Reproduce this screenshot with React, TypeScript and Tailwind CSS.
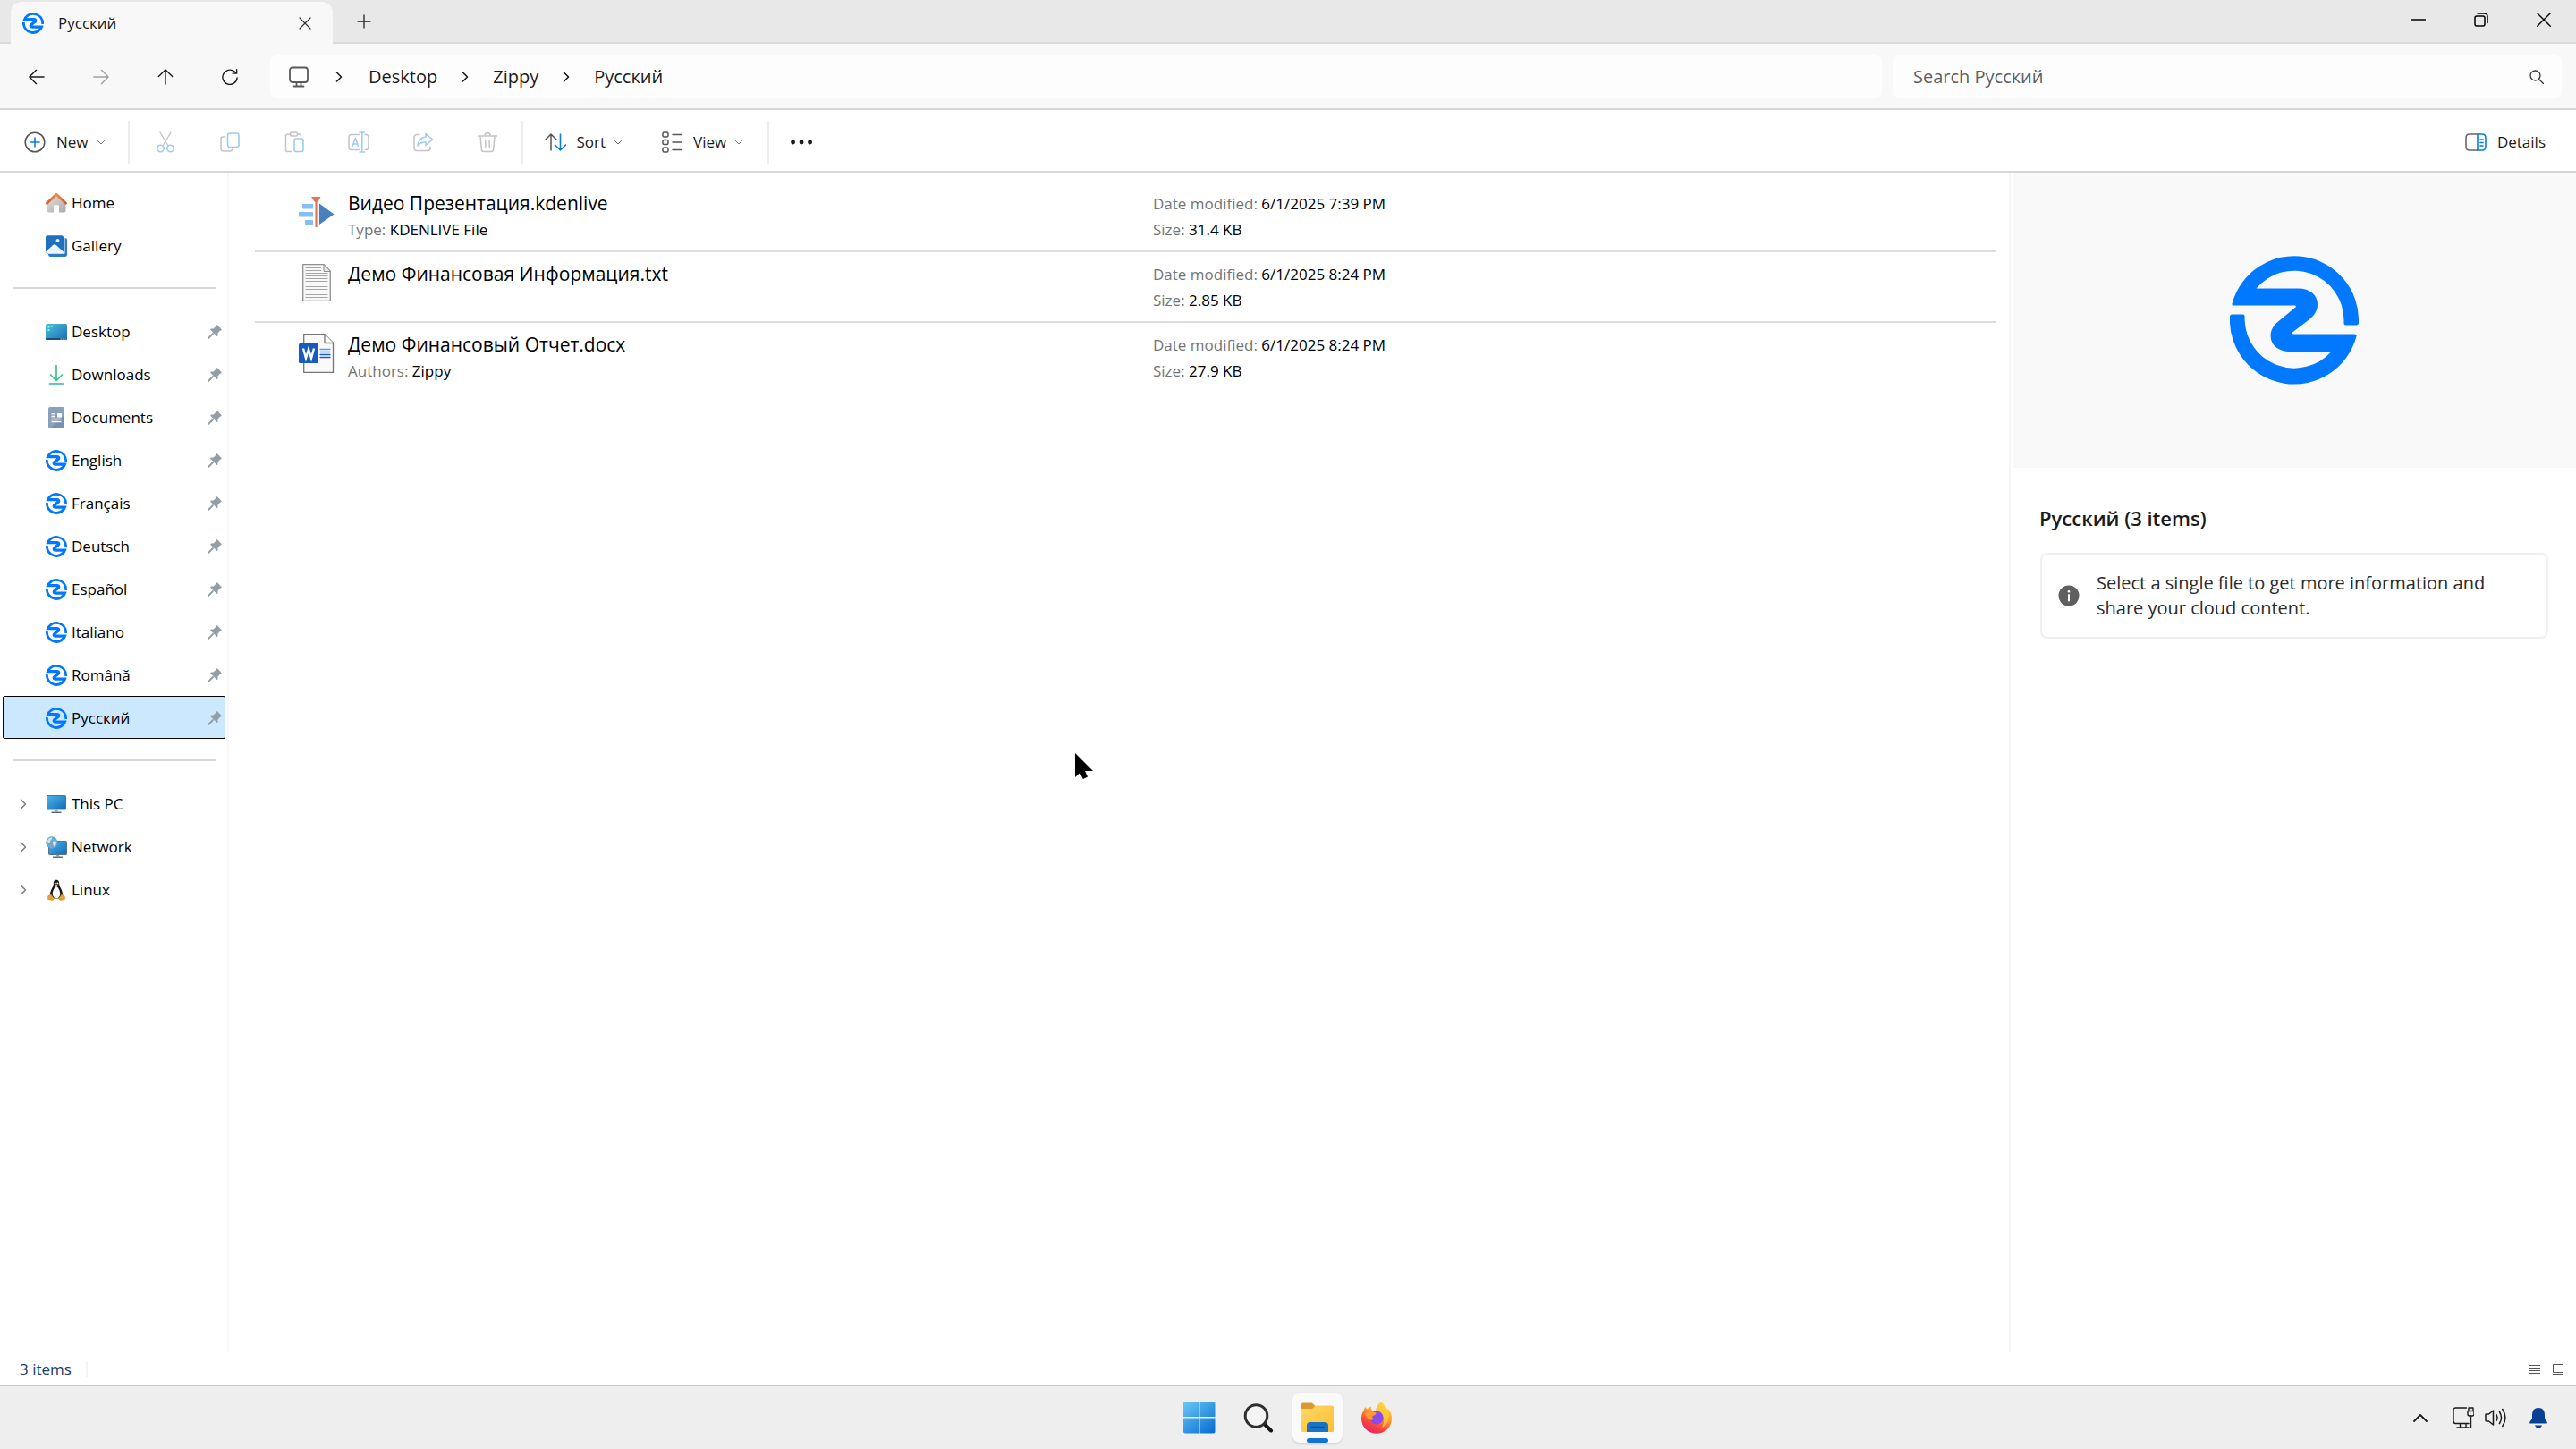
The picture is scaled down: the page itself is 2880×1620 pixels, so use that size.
import type { ReactNode } from "react";

const STROKE = { fill: "none", strokeLinecap: "round", strokeLinejoin: "round" } as const;

type BoxProps = { size: number; children: ReactNode; className?: string; view?: string; height?: number };

function Icon({ size, children, className = "", view = "0 0 24 24", height }: BoxProps) {
  return (
    <svg width={size} height={height ?? size} viewBox={view} className={`block shrink-0 ${className}`} aria-hidden="true" {...STROKE}>
      {children}
    </svg>
  );
}

function Logo({ size }: { size: number }) {
  return (
    <svg width={size} height={size} viewBox="0 0 144 144" className="block shrink-0" aria-hidden="true">
      <path
        fill="#0078ff"
        d="M2.5 53.5A72 72 0 0 1 144 74.500Q144 77.500 141.500 77.500H129.500Q127.500 77.500 127.500 75.500V72A55.500 55.500 0 0 0 29.500 36.500H76C90 36.500 98 44 98 54C98 61 95 66 89 71L70 85.500Q69 87.500 71 87.500H139.500Q142 87.500 141.500 90A72 72 0 0 1 0 68Q0 65.500 2.500 65.500H14.500Q16.600 65.500 16.600 67.500V72A55.500 55.500 0 0 0 113.500 107H69C54 107 45.600 100 45.600 89C45.600 83 48.500 78 54.300 73.200L73.500 57.500Q74.500 55.500 72.500 55.500H4Q2 55.500 2.500 53.500Z"
      />
    </svg>
  );
}

function ChevronRight({ className = "text-[#1b1b1b]" }: { className?: string }) {
  return (
    <Icon size={12} view="0 0 12 12" className={className}>
      <path d="M3.500 1L8.500 6L3.500 11" stroke="currentColor" strokeWidth="1.6" />
    </Icon>
  );
}

function ChevronDown() {
  return (
    <Icon size={8} view="0 0 8 8">
      <path d="M.5 2.500L4 6L7.500 2.500" stroke="#777" strokeWidth="1" />
    </Icon>
  );
}

function HomeIcon() {
  return (
    <Icon size={24}>
      <defs>
        <linearGradient id="wall" x1="0" y1="0" x2="1" y2="1">
          <stop offset="0" stopColor="#e2e2e2" />
          <stop offset="1" stopColor="#a9a9a9" />
        </linearGradient>
        <linearGradient id="roof" x1="0" y1="0" x2="1" y2="0">
          <stop offset="0" stopColor="#e2522f" />
          <stop offset=".5" stopColor="#f08a3c" />
          <stop offset="1" stopColor="#e2522f" />
        </linearGradient>
      </defs>
      <path d="M12 2.500L22.500 12.500V20.500Q22.500 22.500 20.500 22.500H15V15.500Q15 14 13.500 14H10.500Q9 14 9 15.500V22.500H3.500Q1.500 22.500 1.500 20.500V12.500Z" fill="url(#wall)" />
      <path d="M1.500 12.200L12 2.200L22.500 12.200" stroke="url(#roof)" strokeWidth="2.800" />
    </Icon>
  );
}

function GalleryIcon() {
  return (
    <Icon size={24}>
      <path d="M3 21H20.500Q21.500 21 21.500 20V3Q24 3 24 5V21.500Q24 24 21.500 24H5.500Q3 24 3 21Z" fill="#2c7bc4" />
      <rect width="20" height="20.500" y=".2" rx="2" fill="#1f6fbf" />
      <path d="M0 18.500L8.500 10.800Q10 9.500 11.500 10.800L20 18.500Q20 20.700 18 20.700H2Q0 20.700 0 18.500Z" fill="#eaf5fd" />
      <circle cx="13.500" cy="6" r="2" fill="#dff0fc" />
    </Icon>
  );
}

function DesktopIcon() {
  return (
    <Icon size={24}>
      <defs>
        <linearGradient id="desk" x1="0" y1="0" x2="1" y2="1">
          <stop offset="0" stopColor="#4cc3d9" />
          <stop offset="1" stopColor="#1f6bb5" />
        </linearGradient>
      </defs>
      <rect y="3" width="24" height="18" rx="1.500" fill="url(#desk)" />
      <path d="M0 19H24V19.500Q24 21 22.500 21H1.500Q0 21 0 19.500Z" fill="#17507f" />
      <path d="M2.500 5.500H4.500V7.500H2.500ZM2.500 9H4.500V11H2.500ZM6 5.500H7.500V7H6Z" fill="#8ff0ea" />
      <path d="M17 20H18M19.500 20H20.500M22 20H22.500" stroke="#bcd8ee" />
    </Icon>
  );
}

function DownloadsIcon() {
  return (
    <Icon size={24}>
      <path d="M12 1.500V18M5.500 12L12 18.500L18.500 12" stroke="#3fbf8f" strokeWidth="1.700" />
      <path d="M4.500 22H19.500" stroke="#35b3a0" strokeWidth="1.700" />
    </Icon>
  );
}

function DocumentsIcon() {
  return (
    <Icon size={24}>
      <rect x="3" width="18" height="24" rx="2" fill="#8aa0bb" />
      <path d="M21 9V22Q21 24 19 24H5Z" fill="#788faf" />
      <path d="M6.500 7.800H11M6.500 10.500H11M6.500 13.500H17.500M6.500 16.500H17.500" stroke="#fff" strokeWidth="1.400" strokeLinecap="butt" />
      <rect x="13" y="7" width="5" height="4.500" fill="#fff" />
    </Icon>
  );
}

function PcIcon() {
  return (
    <Icon size={24}>
      <defs>
        <linearGradient id="pc" x1="0" y1="0" x2="1" y2="1">
          <stop offset="0" stopColor="#4ab8ea" />
          <stop offset="1" stopColor="#1568b5" />
        </linearGradient>
      </defs>
      <rect x="1.500" y="2.500" width="21" height="15.500" rx=".8" fill="url(#pc)" stroke="#56708a" strokeWidth="1" />
      <path d="M10.500 18.500H13.500V20.500H10.500Z" fill="#9aa4ad" />
      <path d="M7 21.300H17" stroke="#5c6872" strokeWidth="1.500" />
    </Icon>
  );
}

function NetworkIcon() {
  return (
    <Icon size={24}>
      <rect x="3.500" y="5.500" width="20" height="15" rx=".8" fill="url(#pc)" stroke="#56708a" strokeWidth="1" />
      <path d="M12 21H15V22.500H12Z" fill="#9aa4ad" />
      <path d="M8.500 23.200H18.500" stroke="#5c6872" strokeWidth="1.400" />
      <circle cx="6.800" cy="6.800" r="6.600" fill="#6fa9cc" />
      <path d="M2 4.500Q4 1 7 1.500Q8 3 5.500 4.500Q5 7 3.500 7.500Q2 6.500 2 4.500ZM8 6Q11 4 12.500 7Q11.500 10.500 9.500 11.500Q7.500 9 8 6Z" fill="#cfe6f1" />
    </Icon>
  );
}

function LinuxIcon() {
  return (
    <Icon size={24}>
      <path d="M12 .8C9.300 .8 8.600 3 8.900 5.800C9 8 6.800 10 5.800 13C5 15.500 4.500 17.500 5.500 19.500Q12 24 18.500 19.500C19.500 17.500 19 15.500 18.200 13C17.200 10 15.200 8 15.200 5.800C15.300 2.500 14.500 .8 12 .8Z" fill="#161616" />
      <path d="M12 8C10.200 8.500 8.200 12 7.800 15.500C7.600 18.500 9.500 21.500 12 21.500S16.500 18.500 16.200 15.500C15.800 12 13.800 8.500 12 8Z" fill="#fff" />
      <circle cx="10.700" cy="4.600" r="1" fill="#fff" />
      <circle cx="13.400" cy="4.600" r="1" fill="#fff" />
      <path d="M9.900 6.700L12 5.500L14.200 6.700L12 8.400Z" fill="#eea42b" />
      <path d="M2.800 18.800L6 17L9.500 21.500Q9 23.800 6.500 23.300L2.500 22.300ZM21.200 18.800L18 17L14.500 21.500Q15 23.800 17.500 23.300L21.500 22.300Z" fill="#e5a034" stroke="#b8781c" strokeWidth=".5" />
    </Icon>
  );
}

function PinIcon() {
  return (
    <Icon size={16} view="0 0 16 16">
      <path d="M9.800 .5Q10.500 0 11.200 .6L15.500 4.900Q16 5.600 15.300 6.200L14 6.800L11.500 9.500V12Q11.300 13.500 10.200 12.700L3.400 5.900Q2.700 4.700 4.200 4.600L6.600 4.500L9.200 2Z" fill="#939ea5" />
      <path d="M6 10L1 15" stroke="#939ea5" strokeWidth="1.800" />
    </Icon>
  );
}

function KdenliveIcon() {
  return (
    <Icon size={40} view="0 0 40 40">
      <path d="M4 11H16V16.500H4ZM0 20H16V25.500H0ZM7 29H16V34.500H7Z" fill="#86bdf3" />
      <path d="M14 3H24.500L21.500 8.500H17.500Z" fill="#dc7460" />
      <path d="M19.500 7V37" stroke="#dc7460" strokeWidth="2.200" strokeLinecap="butt" />
      <path d="M23 10.500L39.500 22.500L23 34Z" fill="#4a7fbe" />
    </Icon>
  );
}

function TextFileIcon() {
  return (
    <Icon size={32} height={42} view="0 0 32 42">
      <path d="M.7 .7H24L31.300 8.500V41.300H.7Z" fill="#f8f8f8" stroke="#909090" strokeWidth="1.300" />
      <path d="M24 .7V8.500H31.300Z" fill="#e4e4e4" stroke="#909090" />
      <path d="M3.500 4.500H21M3.500 7.500H21M3.500 10.500H28.500M3.500 13.500H28.500M3.500 16.500H28.500M3.500 19.500H28.500M3.500 22.500H28.500M3.500 25.500H28.500M3.500 28.500H28.500M3.500 31.500H28.500M3.500 34.500H28.500M3.500 37.500H28.500" stroke="#a6a6a6" strokeLinecap="butt" />
    </Icon>
  );
}

function WordFileIcon() {
  return (
    <Icon size={40} height={44} view="0 0 40 44">
      <path d="M5.700 .7H29L38.500 10.500V43.300H5.700Z" fill="#fafafa" stroke="#767676" strokeWidth="1.300" />
      <path d="M29 .7V10.500H38.500" fill="#fff" stroke="#767676" strokeWidth="1.300" />
      <path d="M24 17.500H35" stroke="#4aa5e8" strokeWidth="1.300" />
      <path d="M24 20.500H35" stroke="#2b7cd3" strokeWidth="1.300" />
      <path d="M24 23.500H35M24 26.500H35" stroke="#185abd" strokeWidth="1.300" />
      <rect y="11" width="22" height="22" rx="1.500" fill="#185abd" />
      <path d="M5 16.500L8 27.500L11 17.500L14 27.500L17 16.500" stroke="#fff" strokeWidth="2.400" strokeLinecap="butt" strokeLinejoin="miter" />
    </Icon>
  );
}

const GREY = "#c4c4c4";
const BLUE = "#9cccf3";

const fileActions: { label: string; art: ReactNode }[] = [
  {
    label: "Cut",
    art: (
      <>
        <path d="M6 1L15 16M18 1L9 16" stroke={GREY} strokeWidth="1.400" />
        <circle cx="6.500" cy="19" r="3.700" stroke={BLUE} strokeWidth="1.600" />
        <circle cx="17.500" cy="19" r="3.700" stroke={BLUE} strokeWidth="1.600" />
      </>
    ),
  },
  {
    label: "Copy",
    art: (
      <>
        <path d="M6.500 6H4.500Q2 6 2 8.500V19Q2 22 5 22H12Q14.500 22 14.500 20" stroke={GREY} strokeWidth="1.500" />
        <rect x="9.500" y="2" width="12.500" height="15.500" rx="2.500" stroke={BLUE} strokeWidth="1.600" />
      </>
    ),
  },
  {
    label: "Paste",
    art: (
      <>
        <path d="M7.500 3H4.500Q2.500 3 2.500 5V20.500Q2.500 22.500 4.500 22.500H9M15.500 3H17.500Q19.500 3 19.500 5" stroke={GREY} strokeWidth="1.500" />
        <rect x="7.500" y="1" width="8" height="4" rx="1.500" stroke={GREY} strokeWidth="1.500" />
        <rect x="12" y="8" width="10" height="14.500" rx="2" stroke={BLUE} strokeWidth="1.600" />
      </>
    ),
  },
  {
    label: "Rename",
    art: (
      <>
        <path d="M12.500 3.500H4Q1 3.500 1 6.500V17.500Q1 20.500 4 20.500H12.500M19 3.500H20Q23 3.500 23 6.500V17.500Q23 20.500 20 20.500H19" stroke={GREY} strokeWidth="1.500" />
        <path d="M13 1H18.500M15.800 1V23M13 23H18.500M5 16.500L8.300 7.500L11.600 16.500M6 14H10.500" stroke={BLUE} strokeWidth="1.500" />
      </>
    ),
  },
  {
    label: "Share",
    art: (
      <>
        <path d="M8 3.500H5Q2 3.500 2 6.500V18.500Q2 21.500 5 21.500H17Q20 21.500 20 18.500V17" stroke={GREY} strokeWidth="1.500" />
        <path d="M15 2.500L22.500 9L15 15.500V12Q9.500 11.500 6 16Q7 7 15 6Z" stroke={BLUE} strokeWidth="1.500" />
      </>
    ),
  },
  {
    label: "Delete",
    art: (
      <path d="M1.500 5H22.500M9 4.500Q9 1.500 12 1.500T15 4.500M4 5L5.300 20Q5.500 22.500 8 22.500H16Q18.500 22.500 18.700 20L20 5M9.800 9.500V17.500M14.200 9.500V17.500" stroke={GREY} strokeWidth="1.500" />
    ),
  },
];

const pinned: { name: string; icon: ReactNode; selected?: boolean }[] = [
  { name: "Desktop", icon: <DesktopIcon /> },
  { name: "Downloads", icon: <DownloadsIcon /> },
  { name: "Documents", icon: <DocumentsIcon /> },
  { name: "English", icon: <Logo size={24} /> },
  { name: "Français", icon: <Logo size={24} /> },
  { name: "Deutsch", icon: <Logo size={24} /> },
  { name: "Español", icon: <Logo size={24} /> },
  { name: "Italiano", icon: <Logo size={24} /> },
  { name: "Română", icon: <Logo size={24} /> },
  { name: "Русский", icon: <Logo size={24} />, selected: true },
];

const files = [
  { name: "Видео Презентация.kdenlive", key: "Type:", value: "KDENLIVE File", date: "6/1/2025 7:39 PM", size: "31.4 KB", icon: <KdenliveIcon /> },
  { name: "Демо Финансовая Информация.txt", key: "", value: "", date: "6/1/2025 8:24 PM", size: "2.85 KB", icon: <TextFileIcon /> },
  { name: "Демо Финансовый Отчет.docx", key: "Authors:", value: "Zippy", date: "6/1/2025 8:24 PM", size: "27.9 KB", icon: <WordFileIcon /> },
];

type RowProps = { name: string; icon: ReactNode; pin?: boolean; expand?: boolean; selected?: boolean };

function TreeRow({ name, icon, pin, expand, selected }: RowProps) {
  return (
    <a
      href="#"
      aria-current={selected ? "page" : undefined}
      className={`flex h-12 items-center rounded-[2px] border pt-px pr-[3px] text-[17px] text-black ${selected ? "border-black bg-[#cce8ff]" : "border-transparent"}`}
    >
      <span className="flex w-[47px] shrink-0 pl-4">{expand && <ChevronRight className="text-[#808080]" />}</span>
      {icon}
      <span className="ml-[5px] grow">{name}</span>
      {pin && <PinIcon />}
    </a>
  );
}

function Separator() {
  return (
    <div className="flex h-12 items-center pr-[11px] pl-3">
      <hr className="w-full border-t-2 border-[#d6d6d6]" />
    </div>
  );
}

function TitleBar() {
  return (
    <header className="flex h-[49px] shrink-0 items-stretch border-b-2 border-[#dadada] bg-[#e8e8e8]">
      <div className="mt-0.5 -mb-0.5 ml-3 flex w-[360px] items-center rounded-t-xl bg-[#f8f8f8] pr-[18px] pl-[13px]">
        <Logo size={24} />
        <span className="ml-4 grow text-[17px] font-medium text-[#1b1b1b]">Русский</span>
        <button type="button" aria-label="Close tab" className="p-1.5">
          <Icon size={14} view="0 0 14 14">
            <path d="M1 1L13 13M13 1L1 13" stroke="#333" strokeWidth="1.200" />
          </Icon>
        </button>
      </div>
      <button type="button" aria-label="New tab" className="ml-[19px] px-2">
        <Icon size={16} view="0 0 16 16">
          <path d="M8 1V15M1 8H15" stroke="#222" strokeWidth="1.300" />
        </Icon>
      </button>
      <div className="ml-auto flex pr-px pb-1">
        <button type="button" aria-label="Minimize" className="flex w-[70px] items-center justify-center">
          <Icon size={16} view="0 0 16 16">
            <path d="M.5 8H15.500" stroke="#000" strokeWidth="1.300" />
          </Icon>
        </button>
        <button type="button" aria-label="Restore" className="flex w-[70px] items-center justify-center">
          <Icon size={16} view="0 0 16 16">
            <rect x="1" y="4" width="11" height="11" rx="2" stroke="#000" strokeWidth="1.500" />
            <path d="M4 1H11.500Q15 1 15 4.500V11.500" stroke="#000" strokeWidth="1.500" />
          </Icon>
        </button>
        <button type="button" aria-label="Close" className="flex w-[70px] items-center justify-center">
          <Icon size={16} view="0 0 16 16">
            <path d="M.7 .7L15.300 15.300M15.300 .7L.7 15.300" stroke="#000" strokeWidth="1.400" />
          </Icon>
        </button>
      </div>
    </header>
  );
}

const navButtons = [
  { label: "Back", d: "M19 10H1.500M9.500 1.500L1 10L9.500 18.500", color: "#1b1b1b" },
  { label: "Forward", d: "M1 10H18.500M10.500 1.500L19 10L10.500 18.500", color: "#a0a0a0" },
  { label: "Up", d: "M10 19V1.500M1.500 9.500L10 1L18.500 9.500", color: "#1b1b1b" },
  { label: "Refresh", d: "M19 11A9 9 0 1 1 15.500 3.200L18.300 5.500M18.500 .8V5.700H13.500", color: "#1b1b1b" },
];

function NavBar() {
  return (
    <div className="flex h-[74px] shrink-0 items-center border-b-2 border-[#d6d6d6] bg-[#f8f8f8] pt-0.5 pr-4 pl-[5px]">
      {navButtons.map((b) => (
        <button key={b.label} type="button" aria-label={b.label} className="flex h-12 w-[72px] items-center justify-center">
          <Icon size={18} view="0 0 20 20">
            <path d={b.d} stroke={b.color} strokeWidth="1.500" />
          </Icon>
        </button>
      ))}
      <nav aria-label="Address" className="ml-[9px] flex h-12 grow items-center rounded-lg bg-[#fdfdfd] pl-5 text-[20px] text-[#1b1b1b]">
        <Icon size={24}>
          <rect x="2" y="1.500" width="20" height="16.500" rx="3" stroke="#5a5a5a" strokeWidth="1.800" />
          <path d="M9.500 18.500V22M14.500 18.500V22M6.500 22.500H17.500" stroke="#5a5a5a" strokeWidth="1.800" />
        </Icon>
        <span className="flex w-[66px] justify-center"><ChevronRight /></span>
        <a href="#">Desktop</a>
        <span className="flex w-[62px] justify-center"><ChevronRight /></span>
        <a href="#">Zippy</a>
        <span className="flex w-[62px] justify-center"><ChevronRight /></span>
        <a href="#">Русский</a>
      </nav>
      <label className="ml-3 flex h-12 w-[748px] shrink-0 items-center rounded-lg bg-[#fdfdfd] pr-5 pl-[23px]">
        <input type="search" aria-label="Search" placeholder="Search Русский" className="grow bg-transparent text-[20px] text-[#1b1b1b] outline-none placeholder:text-[#606060]" />
        <Icon size={16} view="0 0 16 16">
          <circle cx="6.500" cy="6.500" r="5.500" stroke="#333" strokeWidth="1.300" />
          <path d="M10.500 10.500L15.500 15.500" stroke="#333" strokeWidth="1.300" />
        </Icon>
      </label>
    </div>
  );
}

function Divider() {
  return <span className="h-12 w-0.5 shrink-0 bg-[#ececec]" />;
}

function Toolbar() {
  return (
    <div className="flex h-[70px] shrink-0 items-center border-b-2 border-[#d6d6d6] bg-white pt-1 pr-[34px] pl-[27px] text-[17px] text-[#1b1b1b]">
      <button type="button" className="mr-[26px] flex items-center">
        <Icon size={24}>
          <circle cx="12" cy="12" r="10.800" stroke="#555" strokeWidth="1.500" />
          <path d="M12 7V17M7 12H17" stroke="#0f7bd8" strokeWidth="1.600" />
        </Icon>
        <span className="mr-2.5 ml-3">New</span>
        <ChevronDown />
      </button>
      <Divider />
      <div className="flex w-[438px] items-center pl-1">
        {fileActions.map((a) => (
          <button key={a.label} type="button" aria-label={a.label} disabled className="flex h-12 w-[72px] items-center justify-center">
            <Icon size={24}>{a.art}</Icon>
          </button>
        ))}
      </div>
      <Divider />
      <button type="button" className="ml-6 flex items-center">
        <Icon size={24}>
          <path d="M7 21V3M1 9L7 3L13 9" stroke="#555" strokeWidth="1.500" />
          <path d="M17.500 3V21M11.500 15L17.500 21L23.500 15" stroke="#0f7bd8" strokeWidth="1.600" />
        </Icon>
        <span className="mr-2.5 ml-3">Sort</span>
        <ChevronDown />
      </button>
      <button type="button" className="ml-11 flex items-center">
        <Icon size={24}>
          <path d="M13 3.500H23M13 12H23M13 20.500H23" stroke="#555" strokeWidth="1.500" />
          <rect x="2" y="1" width="6" height="5" rx="1.500" stroke="#555" strokeWidth="1.500" />
          <rect x="2" y="9.500" width="6" height="5" rx="1.500" stroke="#555" strokeWidth="1.500" />
          <rect x="2" y="18" width="6" height="5" rx="1.500" stroke="#555" strokeWidth="1.500" />
        </Icon>
        <span className="mr-2.5 ml-3">View</span>
        <ChevronDown />
      </button>
      <span className="w-7" />
      <Divider />
      <button type="button" aria-label="See more" className="ml-6">
        <Icon size={24}>
          <path d="M2.500 12H2.600M12 12H12.100M21.500 12H21.600" stroke="#1b1b1b" strokeWidth="4.800" />
        </Icon>
      </button>
      <button type="button" className="ml-auto flex items-center">
        <Icon size={24}>
          <path d="M14 3H5Q1 3 1 7V17Q1 21 5 21H14" stroke="#666" strokeWidth="1.600" />
          <path d="M14 3H19Q23 3 23 7V17Q23 21 19 21H14Z" fill="#f2f9ff" stroke="#0f7bd8" strokeWidth="1.600" />
          <path d="M17 9H20M17 12.500H20M17 16H20" stroke="#0f7bd8" strokeWidth="1.600" />
        </Icon>
        <span className="ml-3">Details</span>
      </button>
    </div>
  );
}

function Sidebar() {
  return (
    <nav aria-label="Folders" className="w-64 shrink-0 border-r-2 border-[#f7f7f7] pt-[9px] pr-0.5 pl-[3px]">
      <TreeRow name="Home" icon={<HomeIcon />} />
      <TreeRow name="Gallery" icon={<GalleryIcon />} />
      <Separator />
      {pinned.map((p) => (
        <TreeRow key={p.name} name={p.name} icon={p.icon} selected={p.selected} pin />
      ))}
      <Separator />
      <TreeRow name="This PC" icon={<PcIcon />} expand />
      <TreeRow name="Network" icon={<NetworkIcon />} expand />
      <TreeRow name="Linux" icon={<LinuxIcon />} expand />
    </nav>
  );
}

function FileList() {
  return (
    <main className="min-w-0 grow pt-2.5 pr-[15px] pl-[29px]">
      <ul>
        {files.map((f, i) => (
          <li key={f.name} className={`flex h-[79px] border-b-2 pl-[49px] text-[17px] leading-[29px] text-black ${i < files.length - 1 ? "border-[#dcdcdc]" : "border-transparent"}`}>
            <span className="mt-2.5 flex size-12 shrink-0 items-center justify-start">
              <span className="flex w-10 justify-center">{f.icon}</span>
            </span>
            <div className="ml-[7px] w-[900px] shrink-0">
              <div className="mt-[9px] text-[21px] leading-[30px]">{f.name}</div>
              {f.key && (
                <div>
                  <span className="text-[#757575]">{f.key}</span> {f.value}
                </div>
              )}
            </div>
            <div className="mt-2.5">
              <div>
                <span className="text-[#757575]">Date modified:</span> {f.date}
              </div>
              <div>
                <span className="text-[#757575]">Size:</span> {f.size}
              </div>
            </div>
          </li>
        ))}
      </ul>
    </main>
  );
}

function DetailsPane() {
  return (
    <aside className="w-[634px] shrink-0 border-l-2 border-[#f7f7f7] pl-0.5">
      <div className="flex h-[330px] items-center justify-center bg-[#f9f9f9]">
        <Logo size={144} />
      </div>
      <div className="px-[31px]">
        <h2 className="mt-10 -ml-px text-[22px] leading-8 font-semibold text-[#1b1b1b]">Русский (3 items)</h2>
        <div className="mt-[23px] flex items-center rounded-lg border-2 border-[#f0f0f0] bg-white py-[18px] pr-8 pl-[18px]">
          <Icon size={24}>
            <circle cx="12" cy="12" r="11.500" fill="#5f5f5f" />
            <path d="M12 11V17.500" stroke="#fff" strokeWidth="2" />
            <circle cx="12" cy="7.300" r="1.300" fill="#fff" />
          </Icon>
          <p className="ml-[19px] w-[460px] text-[20px] leading-7 text-[#2b2b2b]">Select a single file to get more information and share your cloud content.</p>
        </div>
      </div>
    </aside>
  );
}

function StatusBar() {
  return (
    <footer className="flex h-9 shrink-0 items-center bg-white pt-0.5 pr-3.5 pl-[22px] text-[17px] text-[#1e395b]">
      <span>3 items</span>
      <span className="ml-4 h-[18px] w-0.5 bg-[#f5f5f5]" />
      <button type="button" aria-label="Details view" className="ml-auto">
        <Icon size={12} view="0 0 12 12">
          <path d="M0 1.500H12M0 4.500H12M0 7.500H12M0 10.500H12" stroke="#555" strokeLinecap="butt" />
        </Icon>
      </button>
      <button type="button" aria-label="Large icons view" className="ml-3.5">
        <Icon size={12} view="0 0 12 12">
          <path d="M.5 .5H11.500V9.500H.5ZM0 11.500H12" stroke="#555" strokeLinecap="butt" />
        </Icon>
      </button>
    </footer>
  );
}

function Taskbar() {
  return (
    <div className="flex h-[72px] shrink-0 border-t-2 border-[#c6c6c6] bg-[#eeeeee]">
      <div className="flex-1 pl-8" />
      <div className="flex items-center gap-2.5">
        <button type="button" aria-label="Start" className="flex size-14 items-center justify-center">
          <Icon size={36} view="0 0 36 36">
            <defs>
              <linearGradient id="win" gradientUnits="userSpaceOnUse" x1="0" y1="0" x2="30" y2="36">
                <stop offset="0" stopColor="#6cc8f8" />
                <stop offset="1" stopColor="#0a70d2" />
              </linearGradient>
            </defs>
            <path d="M2 0H17V17H0V2Q0 0 2 0ZM18.500 0H33.500Q35.500 0 35.500 2V17H18.500ZM0 18.500H17V35.500H2Q0 35.500 0 33.500ZM18.500 18.500H35.500V33.500Q35.500 35.500 33.500 35.500H18.500Z" fill="url(#win)" />
          </Icon>
        </button>
        <button type="button" aria-label="Search" className="flex size-14 items-center justify-center">
          <Icon size={34} view="0 0 34 34">
            <path d="M23.500 24L31 31.500" stroke="#161616" strokeWidth="4" />
            <circle cx="14.500" cy="15" r="12.300" fill="#f4f4f4" stroke="#2e2e2e" strokeWidth="3" />
          </Icon>
        </button>
        <button type="button" aria-label="File Explorer" className="relative flex size-14 items-center justify-center rounded-lg bg-[#fafafa] shadow-sm">
          <Icon size={36} view="0 0 36 36">
            <defs>
              <linearGradient id="fold" x1="0" y1="0" x2="1" y2="1">
                <stop offset="0" stopColor="#ffd966" />
                <stop offset="1" stopColor="#fbbd33" />
              </linearGradient>
            </defs>
            <path d="M0 3Q0 1.500 1.500 1.500H11Q12 1.500 13 2.500L15.500 5V12H0Z" fill="#dd9a2c" />
            <path d="M0 8H12L15.500 4.500H34.500Q36 4.500 36 6V32.500Q36 34 34.500 34H1.500Q0 34 0 32.500Z" fill="url(#fold)" />
            <path d="M6 34V27Q6 23 10 23H26Q30 23 30 27V34Z" fill="#1674c8" />
            <path d="M11 28.500H25" stroke="#0c509b" strokeWidth="1.600" />
          </Icon>
          <span className="absolute bottom-0 h-[5px] w-6 rounded-full bg-[#0f73d8]" />
        </button>
        <button type="button" aria-label="Firefox" className="flex size-14 items-center justify-center">
          <Icon size={36} view="0 0 36 36">
            <defs>
              <linearGradient id="fox" x1=".8" y1="0" x2=".3" y2="1">
                <stop offset="0" stopColor="#ffe14d" />
                <stop offset=".4" stopColor="#ff9f2e" />
                <stop offset=".75" stopColor="#f9433c" />
                <stop offset="1" stopColor="#e3246f" />
              </linearGradient>
            </defs>
            <path d="M23 .5C27 3.500 28.500 6.500 29.500 9Q31 9.500 31.500 8.500C34 12 35 15.500 35 19A17 16.800 0 0 1 1 19C1 15 2 12.500 3.500 10.500Q3.700 8 5.500 6Q6.500 8 7.500 8.500Q9.500 6 12 5.500Q11 8 13.500 10.500L17 11Q18 3.500 23 .5Z" fill="url(#fox)" />
            <path d="M23 .5C27 3.500 30 7 31 11C33.500 19 30 27 24 29C27 24 27 17 23 12.500Q19.500 9.500 18 9Q18.500 3.500 23 .5Z" fill="#ffcf3f" opacity=".75" />
            <circle cx="18" cy="18" r="7.600" fill="#8a4bea" />
            <path d="M5 13Q10 10 17.500 12.500Q18 14.500 13.500 16Q12.500 18 14.500 20Q11 22 8 19Q5.500 16.500 5 13Z" fill="#ff9a2b" />
          </Icon>
        </button>
      </div>
      <div className="flex flex-1 items-center justify-end pr-8 text-[#1b1b1b]">
        <button type="button" aria-label="Show hidden icons" className="mr-7">
          <Icon size={16} view="0 0 16 16">
            <path d="M1 12L8 5L15 12" stroke="currentColor" strokeWidth="1.800" />
          </Icon>
        </button>
        <button type="button" aria-label="Network" className="mr-3">
          <Icon size={24}>
            <path d="M15.500 1H3.500Q1 1 1 3.500V16Q1 18.500 3.500 18.500H18M8.500 18.500V23M15 18.500V23M5 23H18M20.500 10V23" stroke="currentColor" strokeWidth="1.400" />
            <path d="M18 4.500V1H23V4.500M17 4.500H24V8Q24 10 22 10H19Q17 10 17 8Z" stroke="currentColor" strokeWidth="1.400" />
          </Icon>
        </button>
        <button type="button" aria-label="Volume" className="mr-[26px]">
          <Icon size={24}>
            <path d="M1 8.500Q1 8 2 8H4.500L9.500 4V20L4.500 16H2Q1 16 1 15ZM13 8.500Q15 12 13 15.500M16.500 5.500Q20.500 12 16.500 18.500M19.800 2.500Q26 12 19.800 21.500" stroke="currentColor" strokeWidth="1.500" />
          </Icon>
        </button>
        <button type="button" aria-label="Notifications">
          <Icon size={20} height={24} view="0 0 20 24">
            <path d="M10 1Q17 1 17 8.500V13L19.800 17V18.500H.2V17L3 13V8.500Q3 1 10 1ZM6 20.500H14Q13 23.500 10 23.500T6 20.500Z" fill="#0a3f96" />
          </Icon>
        </button>
      </div>
    </div>
  );
}

function Pointer() {
  return (
    <div className="pointer-events-none absolute top-[52%] left-[41.7%]">
      <Icon size={22} height={30} view="0 0 22 30">
        <path d="M1 0V27L6.500 22L9.800 29L15 26.500L12 20H21Z" fill="#000" />
      </Icon>
    </div>
  );
}

export default function App() {
  return (
    <div className="relative flex h-screen flex-col overflow-hidden bg-white font-['Open_Sans',sans-serif]">
      <TitleBar />
      <NavBar />
      <Toolbar />
      <div className="flex min-h-0 grow">
        <Sidebar />
        <FileList />
        <DetailsPane />
      </div>
      <StatusBar />
      <Taskbar />
      <Pointer />
    </div>
  );
}
